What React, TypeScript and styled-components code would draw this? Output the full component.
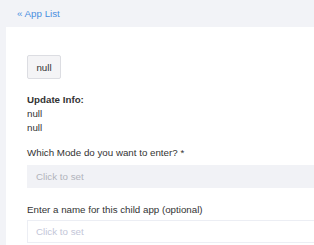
import React from "react";
import styled, { createGlobalStyle } from "styled-components";

const Global = createGlobalStyle`
  html, body { margin: 0; padding: 0; background: #f2f3f7; }
  body { font-family: "Liberation Sans", Arial, sans-serif; font-size: 9.75px; color: #333; }
`;

const Page = styled.div`
  display: flex;
  flex-direction: column;
  min-height: 245px;
`;

const Header = styled.div`
  height: 27px;
  display: flex;
  align-items: center;
  padding-left: 17px;
  padding-bottom: 1px;
  box-sizing: border-box;
`;

const BackLink = styled.a`
  color: #4a8fe0;
  font-size: 9.75px;
  text-decoration: none;
  cursor: pointer;
`;

const Card = styled.div`
  margin-left: 6px;
  flex: 1;
  background: #fff;
  padding: 28px 0 0 21px;
  display: flex;
  flex-direction: column;
`;

const NullButton = styled.button`
  align-self: flex-start;
  height: 24px;
  width: 34px;
  padding: 0;
  border: 1px solid #dcdde2;
  border-radius: 2px;
  background: #f4f4f6;
  font-family: inherit;
  font-size: 9.75px;
  color: #333;
`;

const InfoBlock = styled.div`
  margin-top: 14px;
  line-height: 14px;
`;

const InfoTitle = styled.div`
  font-weight: bold;
`;

const Label = styled.div<{ $gap: number }>`
  margin-top: ${(p) => p.$gap}px;
  line-height: 14px;
`;

const Field = styled.div<{ $variant: "filled" | "outlined"; $gap: number }>`
  margin-top: ${(p) => p.$gap}px;
  height: 23px;
  box-sizing: border-box;
  display: flex;
  align-items: center;
  padding-left: 8px;
  background: ${(p) => (p.$variant === "filled" ? "#f1f2f6" : "#fff")};
  border: 1px solid ${(p) => (p.$variant === "filled" ? "#f1f2f6" : "#eceef4")};
  border-right: none;
  color: ${(p) => (p.$variant === "filled" ? "#b2b4bc" : "#c3c6d8")};
`;

export default function App() {
  return (
    <>
      <Global />
      <Page>
        <Header>
          <BackLink>« App List</BackLink>
        </Header>
        <Card>
          <NullButton>null</NullButton>
          <InfoBlock>
            <InfoTitle>Update Info:</InfoTitle>
            <div>null</div>
            <div>null</div>
          </InfoBlock>
          <Label $gap={11}>Which Mode do you want to enter? *</Label>
          <Field $variant="filled" $gap={5}>Click to set</Field>
          <Label $gap={15}>Enter a name for this child app (optional)</Label>
          <Field $variant="outlined" $gap={3}>Click to set</Field>
        </Card>
      </Page>
    </>
  );
}
